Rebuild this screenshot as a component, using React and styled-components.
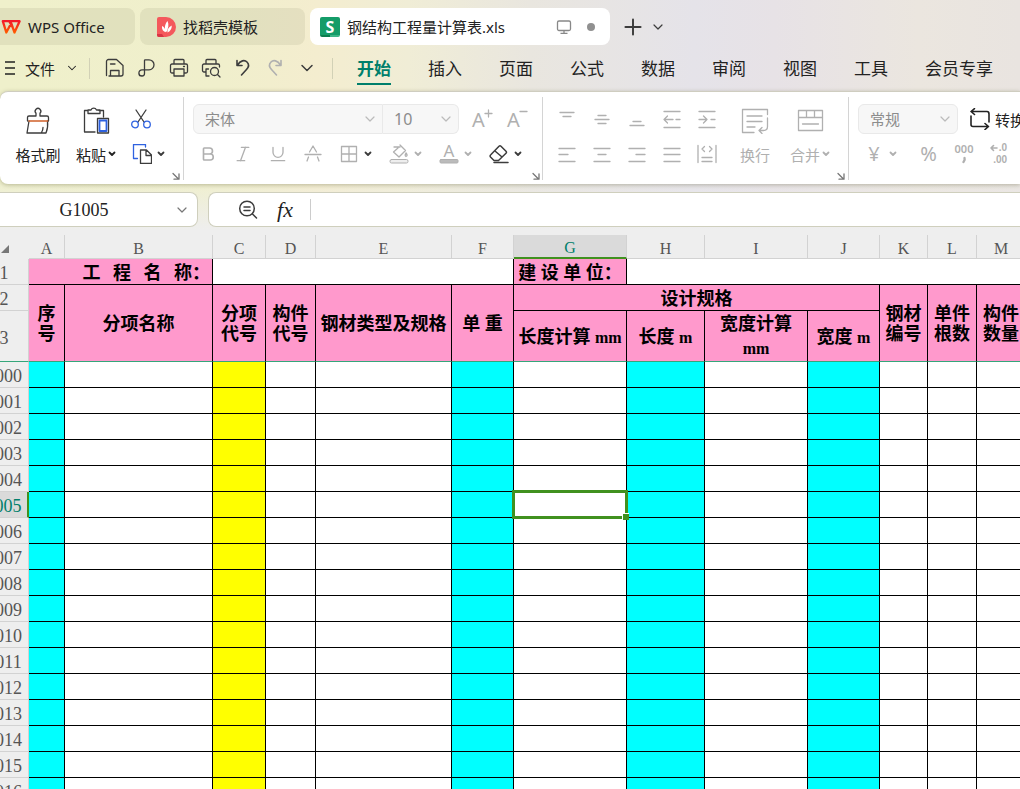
import React from "react";
import styled, { createGlobalStyle, css } from "styled-components";
import { Bold, Italic, Underline, ChevronDown, Plus } from "lucide-react";

const UI = `"Noto Sans", "Noto Sans CJK SC", sans-serif`;
const SHEET = `"Liberation Serif", "Noto Sans CJK SC", serif`;
const INK = "#3c3c3c";
const MUTED = "#b0b0b0";
const TEAL = "#007f6b";
const GREEN = "#40911f";
const BLUE = "#2f62e0";

const GlobalStyle = createGlobalStyle`
  * { box-sizing: border-box; }
  html, body, #root { height: 100%; }
  body { margin: 0; overflow: hidden; background: #eee; font-family: ${UI}; color: #222; }
  button, input, select { font: inherit; color: inherit; margin: 0; }
  svg { display: block; flex: none; }
`;

const Window = styled.div`
  display: flex;
  flex-direction: column;
  height: 100%;
  overflow: hidden;
`;

const Chrome = styled.header`
  flex: none;
  padding-bottom: 8px;
  background:
    linear-gradient(180deg, rgba(238, 238, 238, 0) 76%, #eee 98%),
    linear-gradient(90deg, #eff0cb 0%, #f0efcc 22%, #f4edcf 31%, #f0edd6 40%, #e9e6df 52%, #e5e3e9 68%, #e7e2e6 76%, #ebe6df 90%, #e9e4e0 100%);
`;

const TitleBar = styled.nav`
  display: flex;
  align-items: center;
  gap: 5px;
  height: 45px;
  padding-top: 8px;
`;

const FileTab = styled.button`
  display: flex;
  align-items: center;
  gap: 7px;
  flex: none;
  width: ${(p) => p.$width}px;
  height: 37px;
  padding: 0 15px 0 ${(p) => p.$indent}px;
  border: 0;
  border-radius: ${(p) => (p.$flush ? "0 8px 8px 0" : "8px")};
  background: ${(p) => (p.$active ? "#fff" : "rgba(120, 120, 90, 0.12)")};
  font-size: 15px;
  white-space: nowrap;
`;

const TabStatus = styled.span`
  display: flex;
  align-items: center;
  gap: 15px;
  margin-left: auto;
`;

const PlainButton = styled.button`
  display: flex;
  align-items: center;
  justify-content: center;
  flex: none;
  gap: 5px;
  width: ${(p) => p.$width}px;
  height: 30px;
  padding: 0;
  border: 0;
  background: none;
  color: ${(p) => (p.$muted ? MUTED : INK)};
`;

const SheetMark = styled.span`
  display: flex;
  align-items: center;
  justify-content: center;
  width: 20px;
  height: 20px;
  border-radius: 2px;
  background: linear-gradient(90deg, #0b7d4f 50%, #3cb586 50%) bottom / 100% 2px no-repeat, #149c68;
  color: #fff;
  font: bold 16px/18px "Open Sans", sans-serif;
`;

const MenuBar = styled.nav`
  display: flex;
  align-items: center;
  height: 46px;
  overflow: hidden;
`;

const FileMenu = styled.button`
  display: flex;
  align-items: center;
  flex: none;
  gap: 10px;
  width: 89px;
  padding: 0 0 0 5px;
  border: 0;
  background: none;
  font-size: 15px;
`;

const MenuRule = styled.span`
  flex: none;
  width: 1px;
  height: 21px;
  background: #d2d1b6;
`;

const QuickTools = styled.div`
  display: flex;
  flex: none;
  padding: 0 9px;
`;

const MenuTabs = styled.div`
  display: flex;
  flex: none;
  gap: 37px;
  padding-left: 24px;
`;

const MenuTab = styled.button`
  flex: none;
  height: 34px;
  padding: 4px 0 0;
  border: 0;
  border-bottom: 2px solid ${(p) => (p.$active ? TEAL : "transparent")};
  background: none;
  color: ${(p) => (p.$active ? TEAL : "#222")};
  font-size: 17px;
  font-weight: ${(p) => (p.$active ? 700 : 400)};
  line-height: 28px;
`;

const Ribbon = styled.section`
  display: flex;
  height: 93px;
  overflow: hidden;
  border-top: 1px solid #cfcdc0;
  border-radius: 8px 0 0 8px;
  background: #fff;
  box-shadow: 0 1px 4px rgba(80, 80, 40, 0.35);
`;

const Group = styled.div`
  display: flex;
  flex: none;
  padding: 12px ${(p) => p.$end || 3}px 0 ${(p) => p.$start}px;
`;

const Divider = styled.span`
  flex: none;
  width: 1px;
  margin: 5px 0 4px;
  background: #d4d4d4;
`;

const Stack = styled.div`
  display: flex;
  flex-direction: column;
  flex: none;
  gap: 5px;
  width: ${(p) => (p.$width ? `${p.$width}px` : "auto")};
`;

const Row = styled.div`
  display: flex;
  align-items: center;
  height: 30px;
  padding-left: ${(p) => p.$indent || 0}px;
  gap: ${(p) => p.$gap || 0}px;
`;

const BigButton = styled.button`
  display: flex;
  flex-direction: column;
  align-items: center;
  flex: none;
  gap: 5px;
  width: ${(p) => p.$width}px;
  height: 65px;
  padding: 0;
  border: 0;
  background: none;
  color: ${(p) => (p.$muted ? MUTED : "#222")};
  font-size: 15px;
  white-space: nowrap;
`;

const BigLabel = styled.span`
  display: flex;
  align-items: center;
  gap: 2px;
  height: 30px;
`;

const ConvertButton = styled.button`
  display: flex;
  align-items: center;
  gap: 3px;
  height: 30px;
  padding: 0;
  border: 0;
  background: none;
  font-size: 15px;
  white-space: nowrap;
`;

const LauncherButton = styled.button`
  align-self: flex-end;
  flex: none;
  width: 8px;
  height: 8px;
  margin-bottom: 4px;
  padding: 0;
  border: 0;
  background: none;
  color: #777;
`;

const SelectBox = styled.label`
  display: flex;
  align-items: center;
  position: relative;
  flex: none;
  width: ${(p) => p.$width}px;
  height: 30px;
  border: 1px solid #e9e9e9;
  border-radius: ${(p) => p.$radius || "6px"};
  ${(p) => p.$joined && css`border-left: 0;`}
  background: #f7f7f7;
  color: #bbb;
  svg { position: absolute; right: 4px; pointer-events: none; }
`;

const Select = styled.select`
  appearance: none;
  width: 100%;
  height: 100%;
  padding: 0 20px 0 11px;
  border: 0;
  background: none;
  color: #8c8c8c;
  font-size: ${(p) => p.$size || 15}px;
`;

const Symbol = styled.span`
  width: 20px;
  font-size: 20px;
  line-height: 24px;
  text-align: center;
`;

const DigitIcon = styled.span`
  display: flex;
  flex-direction: column;
  align-items: flex-end;
  font: 600 10px/14px "Liberation Sans", sans-serif;
`;

const DigitLine = styled.span`
  display: flex;
  align-items: center;
  gap: 1px;
  height: 12px;
`;

const FormulaRow = styled.div`
  display: flex;
  gap: 10px;
  height: 35px;
  margin-top: 8px;
`;

const NameBox = styled.label`
  display: flex;
  align-items: center;
  flex: none;
  width: 198px;
  padding-right: 7px;
  border: 1px solid #cfcfbd;
  border-left: 0;
  border-radius: 0 8px 8px 0;
  background: #fff;
  color: #777;
`;

const NameInput = styled.input`
  flex: 1;
  min-width: 0;
  padding: 2px 6px 0 0;
  border: 0;
  background: none;
  color: #222;
  font: 18px ${SHEET};
  text-align: center;
`;

const FormulaBox = styled.div`
  display: flex;
  align-items: center;
  flex: 1;
  min-width: 0;
  padding-left: 20px;
  border: 1px solid #cfcfbd;
  border-right: 0;
  border-radius: 8px 0 0 8px;
  background: #fff;
`;

const FxButton = styled(PlainButton)`
  color: #222;
  font: italic 22px "Liberation Serif", serif;
`;

const FormulaRule = styled.span`
  width: 1px;
  height: 21px;
  margin-left: 7px;
  background: #ccc;
`;

const FormulaInput = styled.input`
  flex: 1;
  min-width: 0;
  padding: 0 8px;
  border: 0;
  outline: 0;
  background: none;
`;

const SheetView = styled.main`
  flex: 1;
  min-height: 0;
  overflow: hidden;
  background: #fff;
`;

/* The sheet is scrolled a little to the right, so the row numbers are cut. */
const Grid = styled.table`
  table-layout: fixed;
  width: calc(100% + 20px);
  min-width: 1046px;
  margin-left: -20px;
  border-collapse: separate;
  border-spacing: 0;
  font-family: ${SHEET};
`;

const ColumnHead = styled.th`
  height: 24px;
  padding: 4px 0 0;
  border-right: 1px solid #d2d2d2;
  border-bottom: ${(p) => (p.$active ? `2px solid ${GREEN}` : "1px solid #d2d2d2")};
  background: ${(p) => (p.$active ? "#dadada" : "#eee")};
  color: ${(p) => (p.$active ? TEAL : "#555")};
  font-size: 16px;
  font-weight: 400;
  line-height: 18px;
`;

const Corner = styled(ColumnHead)`
  border-right-color: #eee;
  border-bottom-color: #eee;
  svg { margin-left: 21px; }
`;

const RowHead = styled.th`
  height: ${(p) => p.$height || 26}px;
  padding: ${(p) => (p.$height ? 4 : 2)}px 0 0;
  border-right: ${(p) => (p.$active ? `2px solid ${GREEN}` : "1px solid #d2d2d2")};
  border-bottom: 1px solid ${(p) => (p.$frozen ? "#35a67a" : "#d2d2d2")};
  background: ${(p) => (p.$active ? "#dadada" : "#eee")};
  color: ${(p) => (p.$active ? TEAL : "#555")};
  font-size: 18px;
  font-weight: 400;
  line-height: 20px;
`;

const Cell = styled.td`
  position: relative;
  height: 26px;
  padding: 0;
  border-right: 1px solid #000;
  border-bottom: 1px solid #000;
  background: ${(p) => p.$fill || "#fff"};
`;

const OpenCell = styled(Cell)`
  border-right-color: ${(p) => (p.$edge ? "#000" : "#fff")};
`;

const Heading = styled(Cell).attrs({ as: "th" })`
  padding: ${(p) => (p.$loose ? 0 : 2)}px ${(p) => p.$pad || 0}px 0;
  border-bottom-color: ${(p) => (p.$frozen ? "#35a67a" : "#000")};
  background: #ff99cc;
  color: #000;
  font-size: 18px;
  font-weight: 700;
  line-height: ${(p) => (p.$loose ? 24 : 20)}px;
  text-align: ${(p) => p.$align || "center"};
  white-space: nowrap;
`;

const Spaced = styled.span`
  font-family: "DejaVu Sans", "Noto Sans CJK SC", sans-serif;
  white-space: pre;
`;

const Unit = styled.span`
  font-size: 16px;
`;

const Cursor = styled.span`
  position: absolute;
  inset: -2px;
  z-index: 1;
  border: 3px solid ${GREEN};
  &::after {
    content: "";
    position: absolute;
    right: -4px;
    bottom: -4px;
    width: 6px;
    height: 6px;
    border: solid #fff;
    border-width: 1px 0 0 1px;
    background: ${GREEN};
  }
`;

const Icon = ({ w = 20, h = 20, sw = 1.3, children }) => (
  <svg width={w} height={h} viewBox={`0 0 ${w} ${h}`} fill="none" stroke="currentColor" strokeWidth={sw} strokeLinecap="round" strokeLinejoin="round" aria-hidden="true">
    {children}
  </svg>
);

const Caret = () => (
  <Icon w={8} h={6} sw={1.8}><path d="M1.5 1.5 4 4l2.5-2.5" /></Icon>
);

const Thin = ({ size = 16 }) => <ChevronDown size={size} strokeWidth={1.8} />;

const Launcher = ({ name }) => (
  <LauncherButton aria-label={name}>
    <Icon w={8} h={8}><path d="M1 1.5 6.5 7M7 2v5.2H2" /></Icon>
  </LauncherButton>
);

const WpsLogo = () => (
  <svg width="20" height="16" viewBox="0 0 20 16" fill="none" strokeWidth="2.3" strokeLinejoin="round" aria-hidden="true">
    <defs>
      <linearGradient id="wps" x1="0" y1="0" x2="0" y2="1">
        <stop offset="0" stopColor="#f3192b" />
        <stop offset="1" stopColor="#ff5a00" />
      </linearGradient>
    </defs>
    <path stroke="url(#wps)" d="M8 2.2H1.8L5.3 13.500 10.200 4.200 13.500 13.500 18.600 2.200H8.200L12 9" />
  </svg>
);

const DocerLogo = () => (
  <svg width="19" height="20" viewBox="0 0 19 20" aria-hidden="true">
    <path fill="#f4585c" d="M2 0h7a10 10 0 0 1 0 20H2a2 2 0 0 1-2-2V2a2 2 0 0 1 2-2z" />
    <path fill="#d93444" d="M0 17h5l2 3H2a2 2 0 0 1-2-2z" />
    <path fill="#fff" d="M10.500 4c1.700 3.800.8 7.500-1 11-2.500-3.300-1.900-7.500 1-11zM5 9c2 .8 3.500 2.800 4.100 6.300-3-.6-4.500-3-4.100-6.300zM14.800 8.500c0 3.500-1.500 5.800-4.400 7-.1-3.300 1.400-5.800 4.400-7z" />
  </svg>
);

const quickTools = [
  ["保存", <Icon key="i"><path d="M1.500 17.500v-14a2 2 0 0 1 2-2h8l6.500 6V16a2 2 0 0 1-2 2H4M5.500 18v-5.500h8.500V18M5.500 6h4.500" /></Icon>],
  ["输出为PDF", <Icon key="i"><path d="M7.500 8V2.500q0-.7.700-.7H12a5 5 0 0 1 0 10H5a3.100 3.100 0 0 0 0 6.200q2.500 0 2.500-2.500V8M2.500 17.500q-1-1-.5-3" /></Icon>],
  ["打印", <Icon key="i"><path d="M5 6V2.500A1 1 0 0 1 6 1.500h8a1 1 0 0 1 1 1V6M5 15H3a1.500 1.500 0 0 1-1.500-1.500v-6A1.500 1.500 0 0 1 3 6h14a1.500 1.500 0 0 1 1.500 1.500v6A1.500 1.500 0 0 1 17 15h-2M5 11h10v7H5zM14.500 8.500h1" /></Icon>],
  ["打印预览", <Icon key="i"><path d="M5 6V2.500A1 1 0 0 1 6 1.500h8a1 1 0 0 1 1 1V6M4.500 14H3a1.500 1.500 0 0 1-1.500-1.500v-5A1.500 1.500 0 0 1 3 6h14a1.500 1.500 0 0 1 1.500 1.500V9M8 18H5v-7h2.500M16.500 16.500l2.500 2.500" /><circle cx="13.500" cy="13.500" r="4" /></Icon>],
  ["撤销", <Icon key="i" sw={1.6}><path d="M4 2.500v5h5M4.500 7c3-4.500 7-5.500 9.500-3s1.800 5-.5 7.500L8.500 17" /></Icon>],
  ["恢复", <Icon key="i" sw={1.6}><path d="M16 2.500v5h-5M15.500 7C12.500 2.500 8.500 1.500 6 4s-1.800 5 .5 7.500l5 5.500" /></Icon>, true],
  ["更多", <Thin key="i" size={20} />],
];

const menus = ["开始", "插入", "页面", "公式", "数据", "审阅", "视图", "工具", "会员专享"];

const lines = (d) => <Icon><path d={d} /></Icon>;

const alignTop = [
  ["顶端对齐", lines("M3 3.500h14M6 7.500h8")],
  ["垂直居中", lines("M6 6.500h8M3 10.500h14M6 14.500h8")],
  ["底端对齐", lines("M6 12.500h8M3 16.500h14")],
  ["减少缩进", lines("M2 2.500h16M2 18.500h16M11 10.500H2M5.500 7 2 10.500 5.500 14M14 10.500h4")],
  ["增加缩进", lines("M2 2.500h16M2 18.500h16M2 10.500h8M6.500 7l3.500 3.500L6.500 14M14 10.500h4")],
];

const alignBottom = [
  ["左对齐", lines("M2 4.500h16M2 10.500h9M2 17.500h16")],
  ["水平居中", lines("M2 4.500h16M6 10.500h8M2 17.500h16")],
  ["右对齐", lines("M2 4.500h16M9 10.500h9M2 17.500h16")],
  ["两端对齐", lines("M2 4.500h16M2 10.500h16M2 17.500h16")],
  ["分散对齐", lines("M1 1.500v17M19 1.500v17M5 13.500h10M5 17.500h10M7.500 2.500 5 5l2.500 2.500M12.500 2.500 15 5l-2.500 2.500")],
];

const widths = [49, 36, 148, 53, 50, 136, 62, 113, 78, 103, 72, 48, 49];
const letters = "ABCDEFGHIJKLM".split("");
const fills = { A: "#00ffff", C: "#ffff00", F: "#00ffff", H: "#00ffff", J: "#00ffff" };
const rows = Array.from({ length: 17 }, (_, i) => 1000 + i);

function Tabs() {
  return (
    <TitleBar>
      <FileTab $width={135} $indent={1} $flush><WpsLogo />WPS Office</FileTab>
      <FileTab $width={165} $indent={17}><DocerLogo />找稻壳模板</FileTab>
      <FileTab $width={300} $indent={10} $active>
        <SheetMark>S</SheetMark>钢结构工程量计算表.xls
        <TabStatus>
          <svg width="16" height="16" viewBox="0 0 16 16" fill="none" stroke="#888" strokeWidth="1.300" aria-hidden="true">
            <rect x="1.500" y="2" width="13" height="9.500" rx="1.500" /><path d="M8 11.500v2.500M4.500 14.300h7" />
          </svg>
          <svg width="8" height="8" viewBox="0 0 8 8" aria-hidden="true"><circle cx="4" cy="4" r="4" fill="#909090" /></svg>
        </TabStatus>
      </FileTab>
      <PlainButton $width={36} aria-label="新建"><Plus size={26} strokeWidth={1.8} /></PlainButton>
      <PlainButton $width={4} aria-label="标签列表"><Thin size={16} /></PlainButton>
    </TitleBar>
  );
}

function Menu() {
  return (
    <MenuBar>
      <FileMenu>
        <Icon w={10} h={14}><path d="M0 1h10M0 7h10M0 13h10" /></Icon>
        文件
        <Thin size={14} />
      </FileMenu>
      <MenuRule />
      <QuickTools>
        {quickTools.map(([name, icon, muted]) => (
          <PlainButton key={name} $width={32} $muted={muted} aria-label={name}>{icon}</PlainButton>
        ))}
      </QuickTools>
      <MenuRule />
      <MenuTabs>
        {menus.map((m, i) => <MenuTab key={m} $active={i === 0}>{m}</MenuTab>)}
      </MenuTabs>
    </MenuBar>
  );
}

function Tools() {
  return (
    <Ribbon>
      <Group $start={8}>
        <BigButton $width={60}>
          <Icon w={30} h={30}>
            <path stroke={INK} d="M4.500 17v-3.500a1.500 1.500 0 0 1 1.500-1.500h7V9.200a2.800 2.800 0 1 1 4 0V12h7a1.500 1.500 0 0 1 1.500 1.500V17M6 17 4 29h19c1.500-3.500 2-8 1.500-12M18.500 28.500c1-1.500 1.500-3 1.500-5" />
            <path stroke="#d0602a" strokeWidth="1.600" d="M6 17h18.500" />
          </Icon>
          <BigLabel>格式刷</BigLabel>
        </BigButton>
        <BigButton $width={56}>
          <Icon w={30} h={30}>
            <path stroke={INK} d="M7 6.500H3.500V28H14M18 6.500h4.500V13M7 9.500V6h3a3 3 0 0 1 5.500 0H19v3.500z" />
            <path stroke={INK} d="M16.500 14.500h11V29h-11z" />
            <path stroke={BLUE} strokeWidth="1.800" d="M18.500 16.500h7V27h-7z" />
          </Icon>
          <BigLabel>粘贴<Caret /></BigLabel>
        </BigButton>
        <Stack $width={48}>
          <Row>
            <PlainButton $width={34} aria-label="剪切">
              <Icon>
                <path d="M5 1l8 12M15 1 7 13" />
                <g stroke={BLUE}><circle cx="4" cy="15.500" r="3.300" /><circle cx="16" cy="15.500" r="3.300" /></g>
              </Icon>
            </PlainButton>
          </Row>
          <Row>
            <PlainButton $width={48} aria-label="复制">
              <Icon>
                <path stroke={BLUE} d="M5.500 14.500H1.500v-14h12V3" />
                <path d="M8.500 6h6l5 5v8.500h-11zM14 6v5.500h5.500" />
              </Icon>
              <Caret />
            </PlainButton>
          </Row>
        </Stack>
        <Launcher name="剪贴板设置" />
      </Group>
      <Divider />
      <Group $start={6} $end={2}>
        <Stack $width={342}>
          <Row $indent={3}>
            <SelectBox $width={190} $radius="6px 0 0 6px">
              <Select aria-label="字体" defaultValue="宋体"><option>宋体</option></Select><Thin />
            </SelectBox>
            <SelectBox $width={76} $radius="0 6px 6px 0" $joined>
              <Select aria-label="字号" defaultValue="10" $size={16}><option>10</option></Select><Thin />
            </SelectBox>
            <Row $indent={8} $gap={5}>
              <PlainButton $width={30} $muted aria-label="增大字号">
                <Icon w={22} h={30}><text x="1" y="23" fontSize="20" fill="currentColor" stroke="none">A</text><path d="M14 9.500h7M17.500 6v7" /></Icon>
              </PlainButton>
              <PlainButton $width={30} $muted aria-label="减小字号">
                <Icon w={22} h={30}><text x="1" y="23" fontSize="20" fill="currentColor" stroke="none">A</text><path d="M14 7.500h7" /></Icon>
              </PlainButton>
            </Row>
          </Row>
          <Row>
            <PlainButton $width={35} $muted aria-label="加粗"><Bold size={18} strokeWidth={2.2} /></PlainButton>
            <PlainButton $width={35} $muted aria-label="倾斜"><Italic size={20} strokeWidth={1.6} /></PlainButton>
            <PlainButton $width={35} $muted aria-label="下划线"><Underline size={20} strokeWidth={1.6} /></PlainButton>
            <PlainButton $width={35} $muted aria-label="删除线">
              <Icon><path d="M2 10.500h16M6.500 8 10 2l3.500 6M5.500 13 4 17M14.500 13l1.500 4" /></Icon>
            </PlainButton>
            <PlainButton $width={50} aria-label="边框">
              <Icon><path stroke={MUTED} d="M2.500 2.500h15v15h-15zM10 2.500v15M2.500 10h15" /></Icon><Caret />
            </PlainButton>
            <PlainButton $width={50} $muted aria-label="填充颜色">
              <Icon>
                <path d="M5 3h6M11 1l5.500 5.500L10 13 4.500 8 9 4M17 9c1.500 2 1.500 3 0 3.500-1.200-.5-1-2 0-3.500" />
                <rect x="1" y="15.500" width="18" height="3.500" rx="1.500" fill="#eee" strokeWidth="1" />
              </Icon>
              <Caret />
            </PlainButton>
            <PlainButton $width={50} $muted aria-label="字体颜色">
              <Icon h={30}>
                <text x="10" y="18" fontSize="17" textAnchor="middle" fill="currentColor" stroke="none">A</text>
                <rect x="1" y="20.500" width="18" height="3.500" rx="1" fill="#bbb" strokeWidth="1" />
              </Icon>
              <Caret />
            </PlainButton>
            <PlainButton $width={50} aria-label="清除">
              <Icon sw={1.5}><path d="M2 10.500 10 2.300q1-1 2 0l5 5q1 1 0 2L9.500 16.500H5L1.500 13q-1-1.200.5-2.500zM6 7l7 6M5 18.500h14" /></Icon><Caret />
            </PlainButton>
          </Row>
        </Stack>
        <Launcher name="字体设置" />
      </Group>
      <Divider />
      <Group $start={6}>
        <Stack $width={178}>
          {[alignTop, alignBottom].map((set, i) => (
            <Row key={i}>
              {set.map(([name, icon]) => <PlainButton key={name} $width={35} $muted aria-label={name}>{icon}</PlainButton>)}
            </Row>
          ))}
        </Stack>
        <BigButton $width={56} $muted>
          <Icon w={30} h={30}><path d="M14 28.500H2.500v-23h25v5M7 12h15M7 17.500h15M7 23h8M27.500 14v8.500q0 4-4 4H19M22 23.500l-3 3 3 3" /></Icon>
          <BigLabel>换行</BigLabel>
        </BigButton>
        <BigButton $width={54} $muted>
          <Icon w={30} h={30}><path d="M3.500 6.500h24v20h-24zM3.500 13.500h24M11.500 6.500v7M19.500 6.500v7M7.500 20h16" /></Icon>
          <BigLabel>合并<Caret /></BigLabel>
        </BigButton>
        <Launcher name="对齐设置" />
      </Group>
      <Divider />
      <Group $start={9}>
        <Stack>
          <Row $gap={10}>
            <SelectBox $width={100}>
              <Select aria-label="数字格式" defaultValue="常规"><option>常规</option></Select><Thin />
            </SelectBox>
            <ConvertButton>
              <Icon w={24} h={22} sw={1.6}><path d="M3 8v8.500q0 2 2 2h15M17 15.500l3.500 3-3.500 3M21 14V6q0-2.500-2-2.500H3.500M6.500.700 3 3.500l3.500 3" /></Icon>
              转换
            </ConvertButton>
          </Row>
          <Row>
            <PlainButton $width={45} $muted aria-label="货币格式"><Symbol>¥</Symbol><Caret /></PlainButton>
            <Row $indent={8}>
              <PlainButton $width={35} $muted aria-label="百分比"><Symbol>%</Symbol></PlainButton>
              <PlainButton $width={35} $muted aria-label="千位分隔">
                <Icon h={28}><text x="10" y="13" fontSize="11" fontWeight="600" textAnchor="middle" fill="currentColor" stroke="none">000</text><path d="M10.500 18q.8 2-1 4" strokeWidth="2.400" /></Icon>
              </PlainButton>
              <PlainButton $width={35} $muted aria-label="增加小数位">
                <DigitIcon>
                  <DigitLine><Icon w={8} h={8} sw={1.6}><path d="M7 4H1M3.500 1.500 1 4l2.500 2.500" /></Icon>.0</DigitLine>
                  <DigitLine>.00</DigitLine>
                </DigitIcon>
              </PlainButton>
            </Row>
          </Row>
        </Stack>
      </Group>
    </Ribbon>
  );
}

function FormulaBar() {
  return (
    <FormulaRow>
      <NameBox>
        <NameInput aria-label="名称框" defaultValue="G1005" />
        <Thin size={16} />
      </NameBox>
      <FormulaBox>
        <PlainButton $width={38} aria-label="查找">
          <Icon sw={1.5}><circle cx="9" cy="8.500" r="7.300" /><path d="M14.500 14l4 4M6 7h6M6 10.500h6" /></Icon>
        </PlainButton>
        <FxButton $width={36} aria-label="插入函数">fx</FxButton>
        <FormulaRule />
        <FormulaInput aria-label="编辑栏" />
      </FormulaBox>
    </FormulaRow>
  );
}

function Sheet() {
  return (
    <SheetView>
      <Grid>
        <colgroup>
          {widths.map((w, i) => <col key={i} width={w} />)}
          <col />
        </colgroup>
        <thead>
          <tr>
            <Corner aria-label="全选"><svg width="8" height="8" viewBox="0 0 8 8"><path d="M8 0v8H0z" fill="#777" /></svg></Corner>
            {letters.map((l) => <ColumnHead key={l} $active={l === "G"}>{l}</ColumnHead>)}
          </tr>
        </thead>
        <tbody>
          <tr>
            <RowHead>1</RowHead>
            <Heading colSpan={2} $align="right" $pad={2}><Spaced>工  程  名  称：</Spaced></Heading>
            <OpenCell colSpan={4} $edge />
            <Heading>建 设 单 位：</Heading>
            <OpenCell colSpan={6} />
          </tr>
          <tr>
            <RowHead>2</RowHead>
            <Heading rowSpan={2} $frozen>序<br />号</Heading>
            <Heading rowSpan={2} $frozen>分项名称</Heading>
            <Heading rowSpan={2} $frozen>分项<br />代号</Heading>
            <Heading rowSpan={2} $frozen>构件<br />代号</Heading>
            <Heading rowSpan={2} $frozen>钢材类型及规格</Heading>
            <Heading rowSpan={2} $frozen>单 重</Heading>
            <Heading colSpan={4}>设计规格</Heading>
            <Heading rowSpan={2} $frozen>钢材<br />编号</Heading>
            <Heading rowSpan={2} $frozen>单件<br />根数</Heading>
            <Heading rowSpan={2} $frozen>构件<br />数量</Heading>
          </tr>
          <tr>
            <RowHead $height={51} $frozen>3</RowHead>
            <Heading $frozen>长度计算 <Unit>mm</Unit></Heading>
            <Heading $frozen>长度 <Unit>m</Unit></Heading>
            <Heading $frozen $loose>宽度计算<br /><Unit>mm</Unit></Heading>
            <Heading $frozen>宽度 <Unit>m</Unit></Heading>
          </tr>
          {rows.map((n) => (
            <tr key={n}>
              <RowHead $active={n === 1005}>{n}</RowHead>
              {letters.map((l) => (
                <Cell key={l} $fill={fills[l]}>{n === 1005 && l === "G" && <Cursor />}</Cell>
              ))}
            </tr>
          ))}
        </tbody>
      </Grid>
    </SheetView>
  );
}

export default function App() {
  return (
    <Window>
      <GlobalStyle />
      <Chrome>
        <Tabs />
        <Menu />
        <Tools />
        <FormulaBar />
      </Chrome>
      <Sheet />
    </Window>
  );
}
